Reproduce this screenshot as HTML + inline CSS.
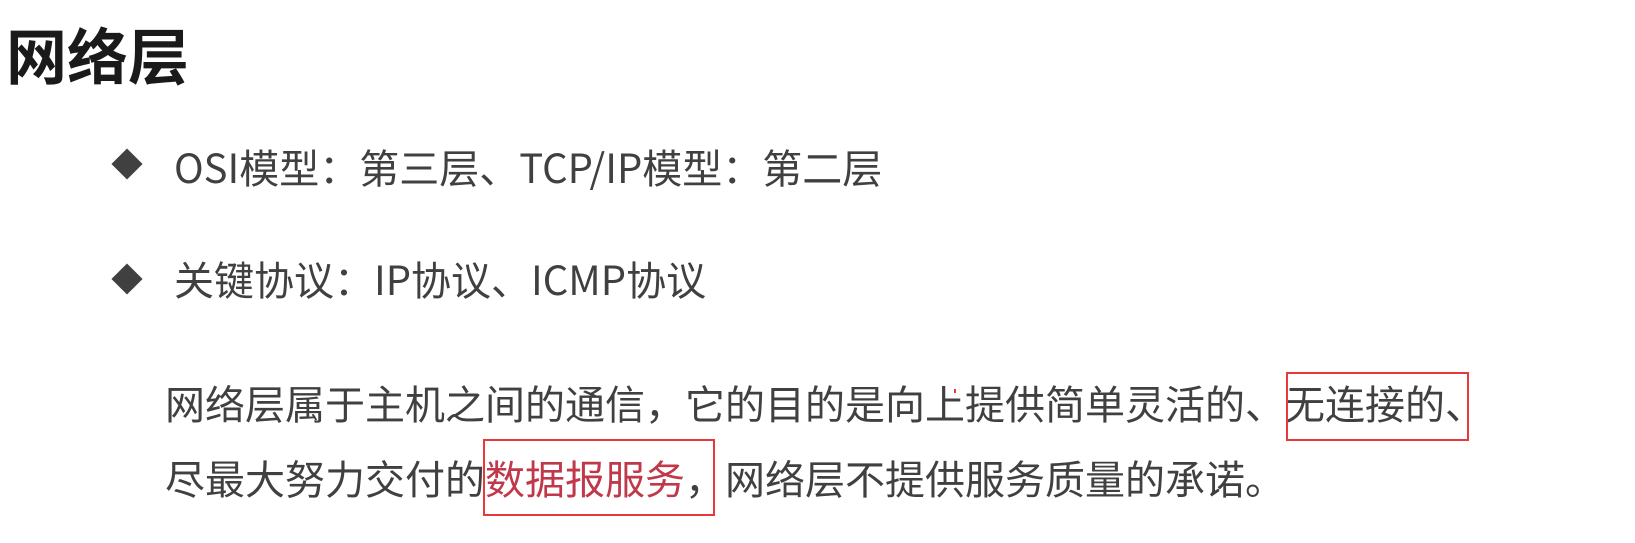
<!DOCTYPE html>
<html><head><meta charset="utf-8"><style>
body{margin:0;width:1635px;height:543px;background:#fff;overflow:hidden;position:relative;font-family:"Noto Sans CJK SC","Liberation Sans",sans-serif;color:#404040}
.t{position:absolute;white-space:nowrap;line-height:1}
.h{left:6px;top:22px;font-size:61px;font-weight:bold;color:#1a1a1a}
.d{position:absolute;width:22px;height:22px;background:#404040;transform:rotate(45deg)}
.b{font-size:40px}
.p{font-size:40px}
.box{position:absolute;border:2px solid #e8393a}
</style></head><body>
<div class="t h">网络层</div>
<div class="d" style="left:116px;top:153px"></div>
<div class="t b" style="left:174px;top:146px">OSI模型：第三层、TCP/IP模型：第二层</div>
<div class="d" style="left:116px;top:268px"></div>
<div class="t b" style="left:174px;top:258px">关键协议：IP协议、ICMP协议</div>
<div class="t p" style="left:165px;top:382px">网络层属于主机之间的通信，它的目的是向上提供简单灵活的、无连接的、</div>
<div class="t p" style="left:165px;top:457px">尽最大努力交付的<span style="color:#c0394a">数据报服务</span>，网络层不提供服务质量的承诺。</div>
<div class="box" style="left:1286px;top:372px;width:179px;height:65px"></div>
<div class="box" style="left:483px;top:439px;width:228px;height:73px"></div>
<div style="position:absolute;left:954px;top:389px;width:2px;height:4px;background:#e8393a"></div>
</body></html>
